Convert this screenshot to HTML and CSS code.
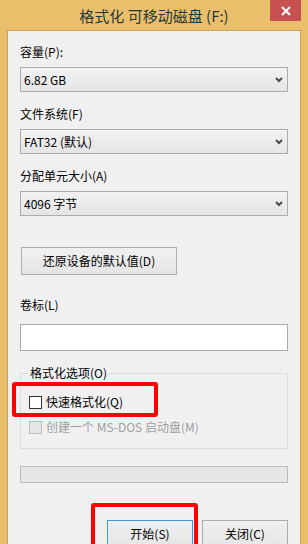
FILE: index.html
```html
<!DOCTYPE html>
<html lang="zh-CN">
<head>
<meta charset="utf-8">
<title>格式化 可移动磁盘 (F:)</title>
<link rel="stylesheet" href="styles.css">
</head>
<body>
<div class="window">
  <div class="titlebar">
    <span class="title">格式化 可移动磁盘 (F:)</span>
    <div class="close">
      <svg width="10" height="10" viewBox="0 0 10 10"><path d="M1 1L9 9M9 1L1 9" stroke="#fff" stroke-width="2" fill="none"/></svg>
    </div>
  </div>
  <div class="client">
    <div class="field">
      <div class="label">容量(P):</div>
      <div class="select"><span>6.82 GB</span><svg class="chev" width="8" height="6" viewBox="0 0 8 6"><path d="M1 1L4 4L7 1" stroke="#4a4a4a" stroke-width="2" fill="none"/></svg></div>
    </div>
    <div class="field">
      <div class="label">文件系统(F)</div>
      <div class="select"><span>FAT32 (默认)</span><svg class="chev" width="8" height="6" viewBox="0 0 8 6"><path d="M1 1L4 4L7 1" stroke="#4a4a4a" stroke-width="2" fill="none"/></svg></div>
    </div>
    <div class="field">
      <div class="label">分配单元大小(A)</div>
      <div class="select"><span>4096 字节</span><svg class="chev" width="8" height="6" viewBox="0 0 8 6"><path d="M1 1L4 4L7 1" stroke="#4a4a4a" stroke-width="2" fill="none"/></svg></div>
    </div>
    <div class="btn restore">还原设备的默认值(D)</div>
    <div class="label vol-label">卷标(L)</div>
    <div class="input"></div>
    <fieldset class="group">
      <legend>格式化选项(O)</legend>
      <div class="check first"><span class="box"></span><span>快速格式化(Q)</span></div>
      <div class="check disabled"><span class="box"></span><span>创建一个 MS-DOS 启动盘(M)</span></div>
    </fieldset>
    <div class="progress"></div>
    <div class="actions">
      <div class="btn action default">开始(S)</div>
      <div class="btn action">关闭(C)</div>
    </div>
    <div class="mark mark-quick"></div>
    <div class="mark mark-start"></div>
  </div>
</div>
</body>
</html>
```
FILE: styles.css
```css
html, body {
  margin: 0;
  padding: 0;
}
body {
  font-family: "Noto Sans CJK SC", "Noto Sans", sans-serif;
  font-size: 12px;
  color: #000;
}
.window {
  width: 308px;
  height: 544px;
  background: #eabf6c;
  display: flex;
  flex-direction: column;
  overflow: hidden;
}
.titlebar {
  position: relative;
  height: 30px;
  flex: none;
  display: flex;
  align-items: center;
  justify-content: center;
}
.title {
  font-size: 15px;
  line-height: 20px;
  color: #263838;
  padding-top: 1px;
}
.close {
  position: absolute;
  top: 0;
  right: 7px;
  width: 31px;
  height: 21px;
  background: #c75050;
  display: flex;
  align-items: center;
  justify-content: center;
}
.client {
  position: relative;
  flex: 1;
  margin: 0 7px;
  border: 1px solid #c9a255;
  border-bottom: none;
  background: #f0f0f0;
  padding: 13px 12px 0 12px;
}
.field {
  margin-bottom: 14px;
}
.field:nth-child(3) {
  margin-bottom: 0;
}
.label {
  line-height: 16px;
  height: 16px;
  margin-bottom: 7px;
}
.select {
  box-sizing: border-box;
  height: 25px;
  border: 1px solid #acacac;
  background: linear-gradient(#f2f2f2, #e5e5e5);
  display: flex;
  align-items: center;
  justify-content: space-between;
  padding: 0 4px 0 3px;
  line-height: 16px;
}
.chev {
  display: block;
}
.btn {
  box-sizing: border-box;
  border: 1px solid #acacac;
  background: linear-gradient(#f0f0f0, #e5e5e5);
  display: flex;
  align-items: center;
  justify-content: center;
  line-height: 16px;
}
.restore {
  margin-top: 31px;
  width: 156px;
  height: 28px;
  margin-left: 1px;
}
.vol-label {
  margin-top: 22px;
  margin-bottom: 11px;
}
.input {
  box-sizing: border-box;
  height: 27px;
  border: 1px solid #abadb3;
  background: #fff;
}
.group {
  margin: 14px 0 0 0;
  padding: 0 7px 13px 7px;
  border: 1px solid #dcdcdc;
  min-width: 0;
}
.group legend {
  padding: 0 2px;
  line-height: 16px;
}
.check {
  display: flex;
  align-items: center;
  height: 16px;
  line-height: 16px;
  padding-left: 1px;
}
.check.first {
  margin-top: 13px;
  margin-bottom: 9px;
}
.box {
  box-sizing: border-box;
  width: 13px;
  height: 13px;
  border: 1px solid #333;
  background: #fff;
  margin-right: 4px;
  flex: none;
}
.check.disabled {
  color: #a0a0a0;
}
.check.disabled .box {
  border-color: #bcbcbc;
  background: #e6e6e6;
}
.progress {
  box-sizing: border-box;
  margin-top: 17px;
  height: 17px;
  border: 1px solid #bcbcbc;
  background: #e6e6e6;
}
.actions {
  margin-top: 37px;
  display: flex;
  justify-content: flex-end;
  gap: 9px;
}
.action {
  width: 86px;
  height: 28px;
}
.action.default {
  border-color: #3c9be6;
}
.mark {
  position: absolute;
  box-sizing: border-box;
  border: 4px solid #ff0000;
  border-radius: 3px;
}
.mark-quick {
  left: 4px;
  top: 351px;
  width: 146px;
  height: 35px;
}
.mark-start {
  left: 83px;
  top: 472px;
  width: 107px;
  height: 70px;
}
```
